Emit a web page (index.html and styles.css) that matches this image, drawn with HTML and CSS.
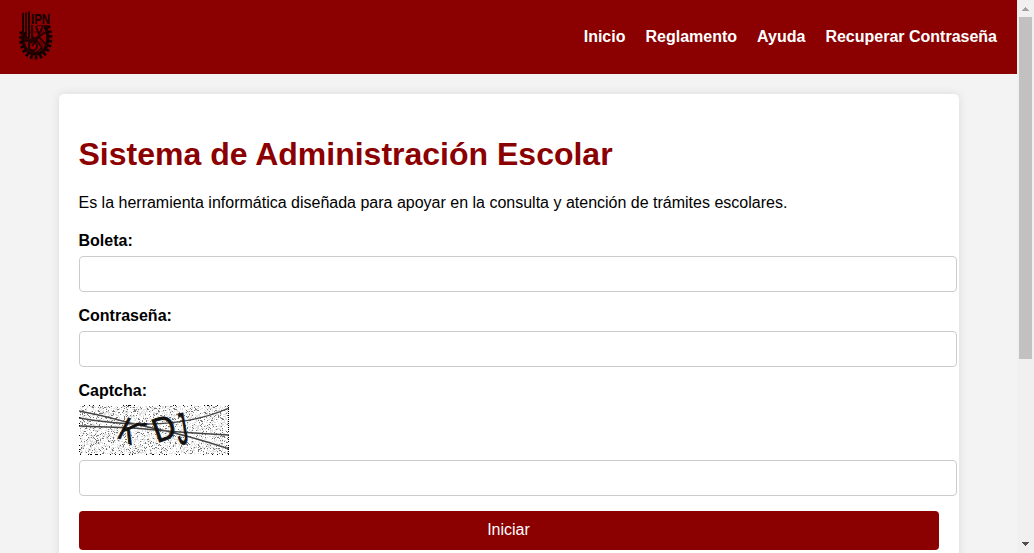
FILE: index.html
```html
<!DOCTYPE html>
<html lang="es">
<head>
<meta charset="utf-8">
<title>Sistema de Administración Escolar</title>
<link rel="stylesheet" href="styles.css">
</head>
<body>
<div class="page">
  <header class="header">
    <svg class="logo" viewBox="0 0 32 50" role="img" aria-label="IPN">
      <path class="logo-teeth" d="M28 16C34 31 28 47 16 47.500S-1 34 2 20"/>
      <path class="logo-ring" d="M25 16C31 29 27 44 16 44S1 33 4 22"/>
      <path class="logo-solid" d="M2 4l2-2v28H2zM5 3l2-1v29H5zM8 2l2-1v27H8zM11 15h2v13h-2z"/>
      <path class="logo-line" d="M2 31h8l4-4M4 25l8 7M14 29l14-8M16 16l4 12 7 8M19 27l-7 9M9 33l7-4 6 9-6 5-7-3zM23 16l-6 13"/>
      <ellipse class="logo-line" cx="13" cy="36" rx="4" ry="4.5"/>
      <path class="logo-fine" d="M17 15.500h12M8 40l6 4M20 31l4 6M10 22h14"/>
      <text class="logo-text" x="11" y="13.5" textLength="19" lengthAdjust="spacingAndGlyphs">IPN</text>
    </svg>
    <nav class="nav">
      <a>Inicio</a>
      <a>Reglamento</a>
      <a>Ayuda</a>
      <a>Recuperar Contraseña</a>
    </nav>
  </header>
  <main class="card">
    <h1>Sistema de Administración Escolar</h1>
    <p>Es la herramienta informática diseñada para apoyar en la consulta y atención de trámites escolares.</p>
    <form class="form">
      <label for="boleta">Boleta:</label>
      <input id="boleta" type="text">
      <label for="pass">Contraseña:</label>
      <input id="pass" type="password">
      <label for="captcha">Captcha:</label>
      <svg class="captcha" viewBox="0 0 150 50">
        <rect class="captcha-bg" width="150" height="50"/>
        <path id="noise-light" class="noise-light"/>
        <path id="noise-dark" class="noise-dark"/>
        <path class="captcha-line" d="M0 6C28 11 45 17 69 22S115 32 150 44M0 13C45 21 102 24 150 3M0 21L55 23Q105 28 150 30"/>
        <g class="captcha-text">
          <text transform="translate(37 32) rotate(27) scale(.8 1)" font-size="33">K</text>
          <text transform="translate(61 27) rotate(-8)" font-size="26">-</text>
          <text transform="translate(78 38) rotate(-19) scale(.92 1)" font-size="34">D</text>
          <text transform="translate(100 40) rotate(-10) scale(.5 1)" font-size="45">J</text>
        </g>
        <path id="noise-edge" class="noise-edge"/>
      </svg>
      <input id="captcha" type="text">
      <button type="button">Iniciar</button>
    </form>
  </main>
</div>
<div class="scrollbar">
  <svg class="arrow arrow-up" viewBox="0 0 7 4"><path d="M3 0h1v1h1v1h1v1h1v1H0V3h1V2h1V1h1z"/></svg>
  <div class="thumb"></div>
  <svg class="arrow arrow-down" viewBox="0 0 7 4"><path d="M0 0h7v1H6v1H5v1H4v1H3V3H2V2H1V1H0z"/></svg>
</div>
<script src="noise.js"></script>
</body>
</html>
```
FILE: styles.css
```css
html { height: 100%; overflow: hidden; }
body {
  margin: 0;
  height: 100%;
  display: flex;
  overflow: hidden;
  background: #f3f3f3;
  color: #000;
  font: 16px "Liberation Sans", Arial, sans-serif;
}
.page { flex: 1; height: 100%; overflow: hidden; }
.header {
  box-sizing: border-box;
  height: 74px;
  padding: 10px 20px;
  display: flex;
  align-items: flex-start;
  justify-content: space-between;
  background: #8b0000;
}
.logo { width: 32px; height: 50px; overflow: visible; }
.logo-teeth { fill: none; stroke: #100000; stroke-width: 4; stroke-dasharray: 2.6 2.1; }
.logo-ring { fill: none; stroke: #180000; stroke-width: 3.4; }
.logo-solid { fill: #210000; }
.logo-line { fill: none; stroke: #200000; stroke-width: 1.8; }
.logo-fine { fill: none; stroke: #420000; stroke-width: 1; }
.logo-text { font: bold 15px/20px "Liberation Sans", sans-serif; fill: #100000; }
.nav { display: flex; gap: 20px; padding-top: 18px; color: #fff; font-weight: bold; line-height: 18px; }
.card {
  box-sizing: border-box;
  width: 900px;
  height: 520px;
  margin: 20px auto;
  padding: 20px;
  background: #fff;
  border-radius: 5px;
  box-shadow: 0 0 10px rgba(0, 0, 0, .1);
}
h1 { margin: 22px 0 21px; font-size: 32px; line-height: 37px; color: #8b0000; }
p { margin: 0 0 20px; line-height: 18px; }
.form { display: flex; flex-direction: column; align-items: flex-start; }
label { margin-bottom: 6px; line-height: 18px; font-weight: bold; }
input {
  box-sizing: border-box;
  width: 878px;
  height: 36px;
  margin: 0 0 15px;
  border: 1px solid #ccc;
  border-radius: 4px;
  background: #fff;
}
button {
  width: 860px;
  height: 39px;
  padding: 0 0 2px;
  border: 0;
  border-radius: 4px;
  background: #8b0000;
  color: #fff;
  font: inherit;
}
.captcha { width: 150px; height: 50px; margin: -1px 0 5px; }
.captcha-bg { fill: #fff; }
.noise-light { fill: #ddd; }
.noise-dark { fill: #777; }
.noise-edge { fill: #000; }
.captcha-line { fill: none; stroke: #444; stroke-width: 1.3; }
.captcha-text { font-family: "Liberation Sans", sans-serif; fill: #111; stroke: #111; stroke-width: .8; }
.scrollbar {
  width: 17px;
  height: 100%;
  display: flex;
  flex-direction: column;
  align-items: center;
  background: #f0f0f0;
}
.arrow { width: 7px; height: 4px; }
.arrow-up { margin: 7px 0 6px; fill: #a3a3a3; }
.arrow-down { margin: auto 0 7px; fill: #505050; }
.thumb { width: 13px; height: 342px; background: #c1c1c1; }
```
FILE: noise.js
```js
// Fixed seed keeps the captcha speckle identical on every load.
let seed = 7351;
function random() {
  seed = (seed * 16807) % 2147483647;
  return seed / 2147483647;
}
function speckle(id, count) {
  let d = "";
  for (let i = 0; i < count; i++) {
    const x = 1 + Math.floor(random() * 148);
    const y = 1 + Math.floor(random() * 48);
    d += `M${x} ${y}h1v1h-1z`;
  }
  document.getElementById(id).setAttribute("d", d);
}
speckle("noise-light", 2400);
speckle("noise-dark", 850);

let edge = "";
for (let x = 0; x < 150; x++) {
  if (random() < 0.16) edge += `M${x} 0h1v1h-1z`;
  if (random() < 0.16) edge += `M${x} 49h1v1h-1z`;
}
for (let y = 0; y < 50; y += 2) {
  if (random() < 0.25) edge += `M0 ${y}h1v1h-1z`;
  if (random() < 0.8) edge += `M149 ${y}h1v1h-1z`;
}
document.getElementById("noise-edge").setAttribute("d", edge);
```
